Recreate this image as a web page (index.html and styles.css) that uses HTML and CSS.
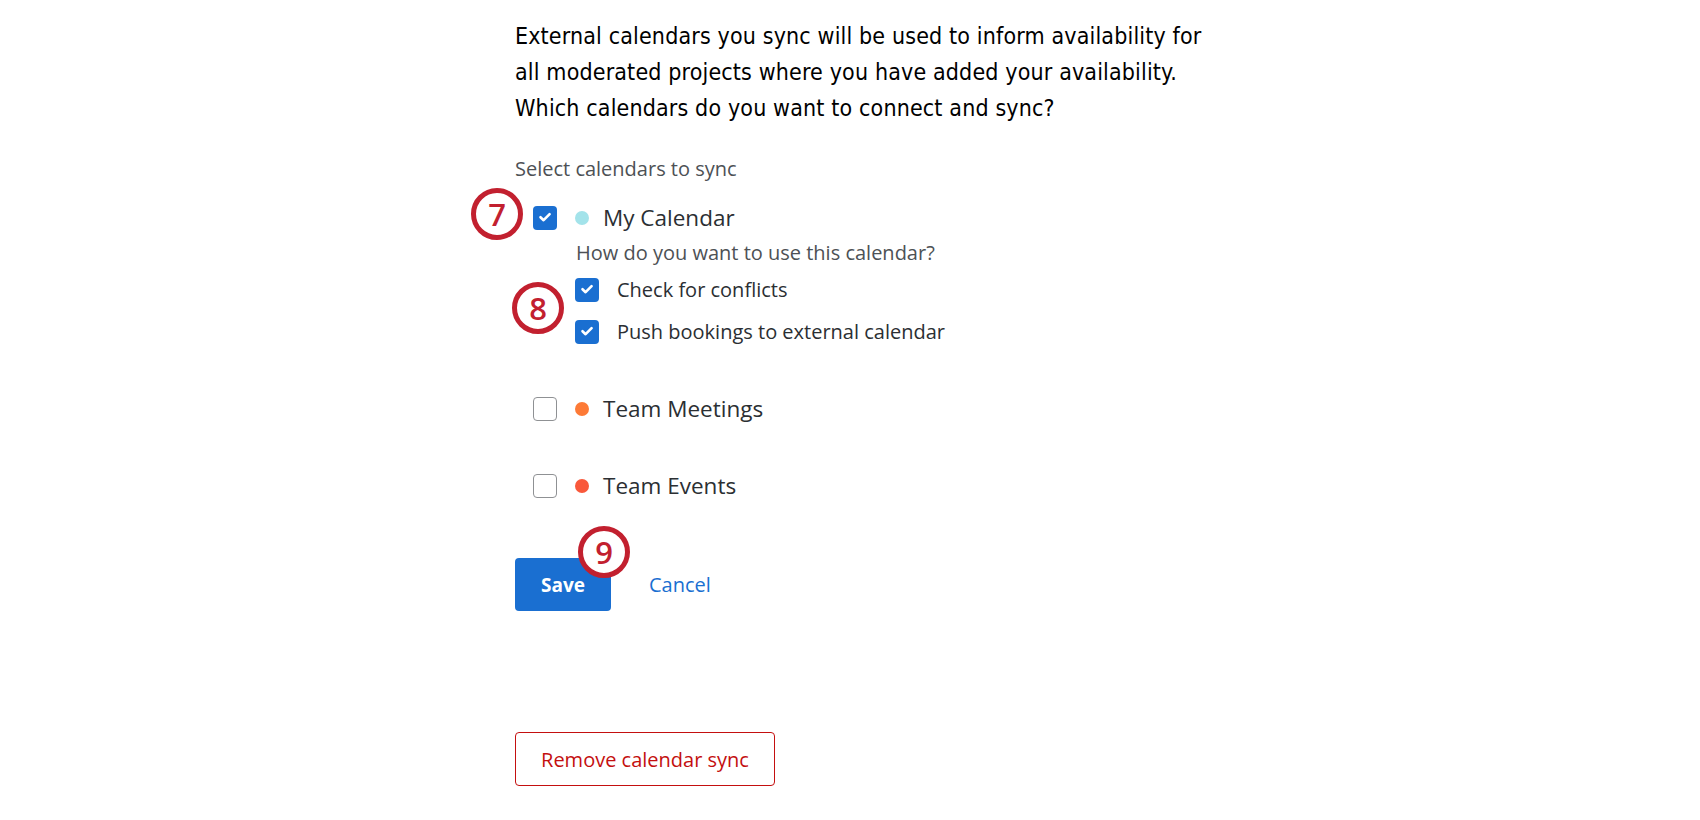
FILE: index.html
```html
<!DOCTYPE html>
<html lang="en">
<head>
<meta charset="utf-8">
<title>Calendar sync</title>
<link rel="stylesheet" href="styles.css">
</head>
<body>
<div class="page">
  <div class="content">
    <p class="intro">External calendars you sync will be used to inform availability for<br>all moderated projects where you have added your availability.<br>Which calendars do you want to connect and sync?</p>

    <div class="field-label">Select calendars to sync</div>

    <div class="cal-row first">
      <span class="cb checked"><svg viewBox="0 0 24 24" width="24" height="24"><path d="M7.5 11.2 L10.6 14.2 L16.6 8.2" fill="none" stroke="#fff" stroke-width="2.6" stroke-linecap="round" stroke-linejoin="round"/></svg></span>
      <span class="dot dot-cyan"></span>
      <span class="cal-name">My Calendar</span>
    </div>

    <div class="sub-label">How do you want to use this calendar?</div>

    <div class="sub-row">
      <span class="cb checked"><svg viewBox="0 0 24 24" width="24" height="24"><path d="M7.5 11.2 L10.6 14.2 L16.6 8.2" fill="none" stroke="#fff" stroke-width="2.6" stroke-linecap="round" stroke-linejoin="round"/></svg></span>
      <span class="sub-text">Check for conflicts</span>
    </div>
    <div class="sub-row second">
      <span class="cb checked"><svg viewBox="0 0 24 24" width="24" height="24"><path d="M7.5 11.2 L10.6 14.2 L16.6 8.2" fill="none" stroke="#fff" stroke-width="2.6" stroke-linecap="round" stroke-linejoin="round"/></svg></span>
      <span class="sub-text">Push bookings to external calendar</span>
    </div>

    <div class="cal-row meetings">
      <span class="cb"></span>
      <span class="dot dot-orange"></span>
      <span class="cal-name">Team Meetings</span>
    </div>

    <div class="cal-row events">
      <span class="cb"></span>
      <span class="dot dot-red"></span>
      <span class="cal-name">Team Events</span>
    </div>

    <div class="actions">
      <button class="btn-save">Save</button>
      <a class="btn-cancel">Cancel</a>
    </div>

    <button class="btn-remove">Remove calendar sync</button>
  </div>

  <span class="marker m7">7</span>
  <span class="marker m8">8</span>
  <span class="marker m9">9</span>
</div>
</body>
</html>
```
FILE: styles.css
```css
html, body {
  margin: 0;
  padding: 0;
  background: #fff;
}

.page {
  position: relative;
  width: 1700px;
  height: 820px;
  overflow: hidden;
  font-family: "Open Sans", "Noto Sans", sans-serif;
  color: #2f3337;
}

.content {
  margin-left: 515px;
  padding-top: 18px;
  width: 760px;
  display: flex;
  flex-direction: column;
  align-items: flex-start;
}

.intro {
  margin: 0;
  font-family: "Liberation Sans Narrow", "DejaVu Sans Condensed", "Roboto", sans-serif;
  font-size: 23px;
  letter-spacing: 0.15px;
  line-height: 36px;
  color: #000;
}

.field-label {
  margin-top: 29px;
  font-size: 20px;
  line-height: 28px;
  color: #4d5155;
}

.cal-row {
  display: flex;
  align-items: center;
  height: 32px;
  margin-left: 18px;
}

.cal-row.first { margin-top: 19px; }
.cal-row.meetings { margin-top: 45px; }
.cal-row.events { margin-top: 45px; }

.cb {
  box-sizing: border-box;
  width: 24px;
  height: 24px;
  border-radius: 4px;
  border: 1px solid #8f9194;
  background: #fff;
  flex: none;
  display: block;
}

.cb svg { display: block; }

.cb.checked {
  border: none;
  background: #1a6fd1;
}

.dot {
  width: 14px;
  height: 14px;
  border-radius: 50%;
  margin-left: 18px;
  flex: none;
}

.dot-cyan { background: #a3e3ea; }
.dot-orange { background: #fd7a36; }
.dot-red { background: #f9583b; }

.cal-name {
  margin-left: 14px;
  font-size: 22.5px;
  line-height: 30px;
  color: #2b2f33;
}

.sub-label {
  margin-top: 5px;
  margin-left: 61px;
  font-size: 20px;
  line-height: 28px;
  color: #4d5155;
}

.sub-row {
  display: flex;
  align-items: center;
  height: 32px;
  margin-left: 60px;
  margin-top: 7px;
}

.sub-row.second { margin-top: 10px; }

.sub-text {
  margin-left: 18px;
  font-size: 20px;
  line-height: 28px;
  color: #2b2f33;
}

.actions {
  display: flex;
  align-items: center;
  margin-top: 56px;
}

.btn-save {
  width: 96px;
  height: 53px;
  border: none;
  border-radius: 4px;
  background: #1a6fd1;
  color: #fff;
  font-family: "Open Sans", sans-serif;
  font-weight: 700;
  font-size: 19px;
  padding: 0;
}

.btn-cancel {
  margin-left: 38px;
  font-size: 20px;
  color: #1a6fd1;
}

.btn-remove {
  margin-top: 121px;
  width: 260px;
  height: 54px;
  box-sizing: border-box;
  border: 1px solid #c40f0f;
  border-radius: 4px;
  background: #fff;
  color: #c40f0f;
  font-family: "Open Sans", sans-serif;
  font-size: 20px;
  padding: 0;
}

.marker {
  position: absolute;
  box-sizing: border-box;
  width: 52px;
  height: 52px;
  border: 5px solid #c2202f;
  border-radius: 50%;
  background: #fff;
  color: #c2202f;
  font-family: "Open Sans", sans-serif;
  font-weight: 600;
  font-size: 31px;
  line-height: 42px;
  text-align: center;
}

.m7 { left: 471px; top: 188px; }
.m8 { left: 512px; top: 282px; }
.m9 { left: 578px; top: 526px; }
```
